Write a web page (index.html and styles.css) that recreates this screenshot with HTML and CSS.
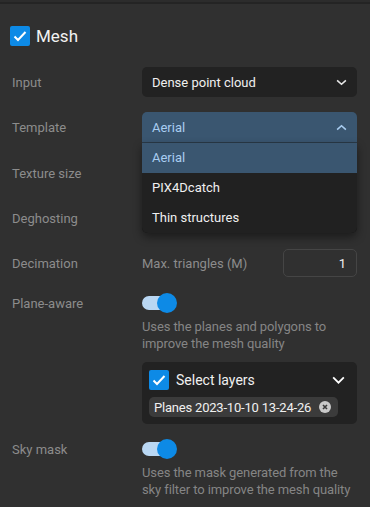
FILE: index.html
```html
<!DOCTYPE html>
<html lang="en">
<head>
    <meta charset="UTF-8">
    <meta name="viewport" content="width=device-width, initial-scale=1.0">
    <title>Mesh</title>
    <link rel="stylesheet" href="styles.css">
</head>
<body>
    <div class="topbar"></div>
    <div class="panel">
        <div class="header">
            <span class="check">
                <svg viewBox="0 0 20 20" width="20" height="20"><path d="M4.5 10.5l3.5 3.5 7.5-8" fill="none" stroke="#fff" stroke-width="2"/></svg>
            </span>
            <span class="title">Mesh</span>
        </div>

        <div class="rows">
            <div class="label">Input</div>
            <div class="select">
                <span>Dense point cloud</span>
                <svg viewBox="0 0 12 8" width="11" height="7"><path d="M1 1.5l5 4.5 5-4.5" fill="none" stroke="#e6e6e6" stroke-width="1.8"/></svg>
            </div>

            <div class="label">Template</div>
            <div class="select-wrap">
                <div class="select open">
                    <span>Aerial</span>
                    <svg viewBox="0 0 12 8" width="11" height="7"><path d="M1 6.5l5-4.5 5 4.5" fill="none" stroke="#a9cdf0" stroke-width="1.8"/></svg>
                </div>
                <div class="menu">
                    <div class="item active">Aerial</div>
                    <div class="item">PIX4Dcatch</div>
                    <div class="item">Thin structures</div>
                </div>
            </div>

            <div class="label">Texture size</div>
            <div class="select"></div>

            <div class="label">Deghosting</div>
            <div class="select"></div>

            <div class="label">Decimation</div>
            <div class="field">
                <span class="hint">Max. triangles (M)</span>
                <div class="num">1</div>
            </div>

            <div class="label label-top">Plane-aware</div>
            <div class="stack">
                <div class="toggle"><span class="knob"></span></div>
                <p class="desc">Uses the planes and polygons to improve the mesh quality</p>
                <div class="layers">
                    <div class="layers-head">
                        <span class="check">
                            <svg viewBox="0 0 20 20" width="20" height="20"><path d="M4.5 10.5l3.5 3.5 7.5-8" fill="none" stroke="#fff" stroke-width="2"/></svg>
                        </span>
                        <span class="layers-title">Select layers</span>
                        <svg class="chev" viewBox="0 0 14 9" width="13" height="8"><path d="M1 1.5l6 6 6-6" fill="none" stroke="#fff" stroke-width="2"/></svg>
                    </div>
                    <div class="chip">
                        <span>Planes 2023-10-10 13-24-26</span>
                        <span class="chip-x">
                            <svg viewBox="0 0 12 12" width="12" height="12"><circle cx="6" cy="6" r="6" fill="#c9c9c9"/><path d="M4 4l4 4M8 4l-4 4" stroke="#3a3a3a" stroke-width="1.6"/></svg>
                        </span>
                    </div>
                </div>
            </div>

            <div class="label label-top">Sky mask</div>
            <div class="stack">
                <div class="toggle"><span class="knob"></span></div>
                <p class="desc">Uses the mask generated from the sky filter to improve the mesh quality</p>
            </div>
        </div>
    </div>
</body>
</html>
```

FILE: styles.css
```css
body {
    margin: 0;
    background-color: #303030;
    font-family: Roboto, "Liberation Sans", sans-serif;
    font-size: 13px;
    color: #eaeaea;
}
.topbar {
    height: 2px;
    background-color: #2c2c2c;
    border-bottom: 2px solid #242424;
}
.panel {
    padding: 22px 13px 0 10px;
}
.header {
    display: flex;
    align-items: center;
    gap: 6px;
    height: 20px;
}
.check {
    display: flex;
    width: 20px;
    height: 20px;
    background-color: #0d8ae6;
    border-radius: 2px;
}
.title {
    font-size: 17px;
    color: #f2f2f2;
}
.rows {
    display: grid;
    grid-template-columns: 130px 215px;
    row-gap: 15px;
    margin-top: 21px;
    padding-left: 2px;
}
.label {
    color: #8c8c8c;
    display: flex;
    align-items: center;
    height: 30px;
}
.label-top {
    height: 18px;
    padding-top: 1px;
}
.select {
    height: 30px;
    display: flex;
    align-items: center;
    justify-content: space-between;
    padding: 0 10px;
    background-color: #222222;
    border-radius: 5px;
    color: #f0f0f0;
}
.select-wrap {
    position: relative;
    z-index: 2;
}
.select.open {
    background-color: #3a5670;
    border-radius: 5px 5px 0 0;
    border-bottom: 1px solid #2a3a48;
    height: 30px;
    color: #a9cdf0;
}
.menu {
    position: absolute;
    left: 0;
    right: 0;
    top: 31px;
    background-color: #212121;
    border-radius: 0 0 6px 6px;
    box-shadow: 0 4px 10px rgba(0, 0, 0, 0.45);
}
.item {
    height: 30px;
    line-height: 30px;
    padding: 0 10px;
    color: #f0f0f0;
}
.item.active {
    background-color: #3a5670;
    color: #a9cdf0;
}
.field {
    display: flex;
    align-items: center;
    justify-content: space-between;
    height: 30px;
}
.hint {
    color: #8c8c8c;
}
.num {
    width: 74px;
    height: 28px;
    box-sizing: border-box;
    border: 1px solid #454545;
    border-radius: 5px;
    text-align: right;
    line-height: 27px;
    padding-right: 10px;
    color: #f0f0f0;
}
.stack {
    display: flex;
    flex-direction: column;
}
.toggle {
    position: relative;
    width: 35px;
    height: 20px;
}
.toggle::before {
    content: "";
    position: absolute;
    left: 0;
    top: 3px;
    width: 32px;
    height: 14px;
    border-radius: 7px;
    background-color: #b9d7f3;
}
.knob {
    position: absolute;
    right: 0;
    top: 0;
    width: 20px;
    height: 20px;
    border-radius: 50%;
    background-color: #0d8ae6;
}
.desc {
    margin: 5px 0 0;
    line-height: 17px;
    color: #858585;
    letter-spacing: -0.1px;
}
.layers {
    margin-top: 10px;
    background-color: #222222;
    border-radius: 5px;
    padding: 8px 12px 7px 7px;
}
.layers-head {
    display: flex;
    align-items: center;
    gap: 7px;
}
.layers-title {
    flex: 1;
    font-size: 14px;
    color: #f0f0f0;
}
.chip {
    display: inline-flex;
    align-items: center;
    gap: 8px;
    margin-top: 7px;
    height: 20px;
    padding: 0 7px 0 5px;
    background-color: #3b3b3b;
    border-radius: 5px;
    color: #f0f0f0;
    white-space: nowrap;
    letter-spacing: -0.2px;
}
.chip-x {
    display: flex;
}
```
